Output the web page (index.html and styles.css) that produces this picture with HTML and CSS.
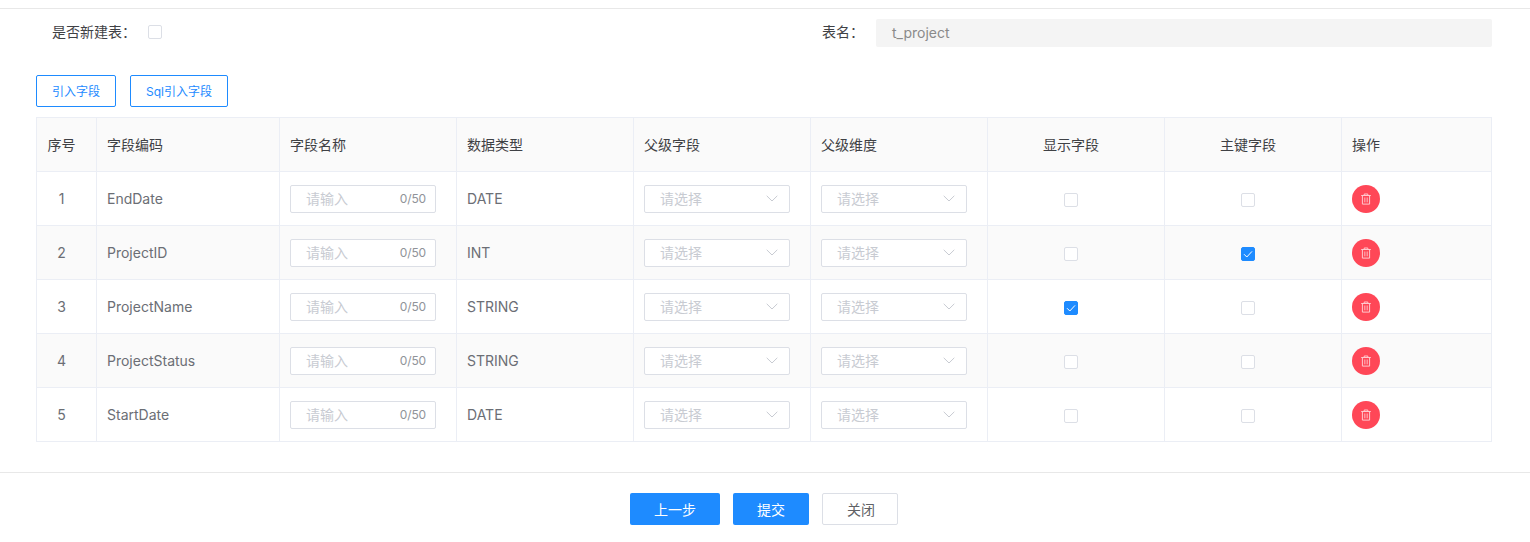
FILE: index.html
```html
<!DOCTYPE html>
<html lang="zh">
<head>
<meta charset="utf-8">
<title>表配置</title>
<link rel="stylesheet" href="styles.css">
</head>
<body>
<svg class="defs" width="0" height="0">
  <symbol id="trash" viewBox="0 0 12 12">
    <path d="M1.2 2.5h9.6M4.2 2.4V1h3.6v1.4M2.4 2.5v8.6h7.2V2.5" fill="none" stroke="currentColor" stroke-width="1"/>
    <path d="M4.5 4.5v4.8M6 4.5v4.8M7.5 4.5v4.8" fill="none" stroke="currentColor" stroke-width=".8" opacity=".75"/>
  </symbol>
  <symbol id="chev" viewBox="0 0 12 7"><path d="M.7.8 6 6l5.3-5.2" fill="none" stroke="currentColor" stroke-width="1"/></symbol>
  <symbol id="tick" viewBox="0 0 14 14"><path d="M3 7.2 5.8 10 11 4.4" fill="none" stroke="currentColor" stroke-width="1"/></symbol>
</svg>
<main class="page">
  <section class="form-row">
    <div class="field field-left">
      <span class="label">是否新建表：</span>
      <span class="check check-form"></span>
    </div>
    <div class="field field-right">
      <span class="label">表名：</span>
      <div class="readonly">t_project</div>
    </div>
  </section>
  <div class="toolbar">
    <button class="btn-outline btn-a">引入字段</button>
    <button class="btn-outline btn-b">Sql引入字段</button>
  </div>
  <table class="grid">
    <colgroup>
      <col class="c-no"><col class="c-code"><col class="c-std"><col class="c-std"><col class="c-std"><col class="c-std"><col class="c-std"><col class="c-std"><col class="c-op">
    </colgroup>
    <thead>
      <tr><th class="center">序号</th><th>字段编码</th><th>字段名称</th><th>数据类型</th><th>父级字段</th><th>父级维度</th><th class="center">显示字段</th><th class="center">主键字段</th><th>操作</th></tr>
    </thead>
    <tbody>
      <tr>
        <td class="center">1</td><td>EndDate</td>
        <td><div class="input"><span>请输入</span><em>0/50</em></div></td><td>DATE</td>
        <td><div class="select"><span>请选择</span><svg class="chev"><use href="#chev"/></svg></div></td>
        <td><div class="select"><span>请选择</span><svg class="chev"><use href="#chev"/></svg></div></td>
        <td class="center"><span class="check"></span></td><td class="center"><span class="check"></span></td>
        <td><button class="del" aria-label="删除"><svg class="trash"><use href="#trash"/></svg></button></td>
      </tr>
      <tr>
        <td class="center">2</td><td>ProjectID</td>
        <td><div class="input"><span>请输入</span><em>0/50</em></div></td><td>INT</td>
        <td><div class="select"><span>请选择</span><svg class="chev"><use href="#chev"/></svg></div></td>
        <td><div class="select"><span>请选择</span><svg class="chev"><use href="#chev"/></svg></div></td>
        <td class="center"><span class="check"></span></td><td class="center"><span class="check on"><svg class="tick"><use href="#tick"/></svg></span></td>
        <td><button class="del" aria-label="删除"><svg class="trash"><use href="#trash"/></svg></button></td>
      </tr>
      <tr>
        <td class="center">3</td><td>ProjectName</td>
        <td><div class="input"><span>请输入</span><em>0/50</em></div></td><td>STRING</td>
        <td><div class="select"><span>请选择</span><svg class="chev"><use href="#chev"/></svg></div></td>
        <td><div class="select"><span>请选择</span><svg class="chev"><use href="#chev"/></svg></div></td>
        <td class="center"><span class="check on"><svg class="tick"><use href="#tick"/></svg></span></td><td class="center"><span class="check"></span></td>
        <td><button class="del" aria-label="删除"><svg class="trash"><use href="#trash"/></svg></button></td>
      </tr>
      <tr>
        <td class="center">4</td><td>ProjectStatus</td>
        <td><div class="input"><span>请输入</span><em>0/50</em></div></td><td>STRING</td>
        <td><div class="select"><span>请选择</span><svg class="chev"><use href="#chev"/></svg></div></td>
        <td><div class="select"><span>请选择</span><svg class="chev"><use href="#chev"/></svg></div></td>
        <td class="center"><span class="check"></span></td><td class="center"><span class="check"></span></td>
        <td><button class="del" aria-label="删除"><svg class="trash"><use href="#trash"/></svg></button></td>
      </tr>
      <tr>
        <td class="center">5</td><td>StartDate</td>
        <td><div class="input"><span>请输入</span><em>0/50</em></div></td><td>DATE</td>
        <td><div class="select"><span>请选择</span><svg class="chev"><use href="#chev"/></svg></div></td>
        <td><div class="select"><span>请选择</span><svg class="chev"><use href="#chev"/></svg></div></td>
        <td class="center"><span class="check"></span></td><td class="center"><span class="check"></span></td>
        <td><button class="del" aria-label="删除"><svg class="trash"><use href="#trash"/></svg></button></td>
      </tr>
    </tbody>
  </table>
  <footer class="footer">
    <button class="btn btn-primary btn-prev">上一步</button>
    <button class="btn btn-primary btn-submit">提交</button>
    <button class="btn btn-close">关闭</button>
  </footer>
</main>
</body>
</html>
```
FILE: styles.css
```css
* { box-sizing: border-box; }
html, body { margin: 0; padding: 0; background: #fff; }
body {
  font-family: Inter, "Noto Sans CJK SC", sans-serif;
  font-size: 14px;
  color: #606266;
  overflow: hidden;
}
.defs { position: absolute; }
.page { height: 542px; padding-top: 8px; }
.form-row {
  display: flex;
  height: 67px;
  border-top: 1px solid #e8e8e8;
  padding: 10px 38px 0 52px;
}
.field { display: flex; align-items: flex-start; }
.field-left { width: 770px; }
.field-right { flex: 1; }
.label { color: #3f4145; line-height: 26px; }
.field-left .label { width: 96px; }
.field-right .label { width: 54px; }
.check-form { margin-top: 6px; }
.readonly {
  flex: 1;
  height: 28px;
  line-height: 28px;
  padding-left: 16px;
  background: #f4f4f4;
  border-radius: 2px;
  color: #8a8a8a;
}
.toolbar { display: flex; gap: 14px; height: 42px; padding-left: 36px; }
.btn-outline {
  height: 32px;
  padding: 0 0 2px;
  background: #fff;
  border: 1px solid #1e8bff;
  border-radius: 2px;
  color: #1e8bff;
  font: inherit;
  font-size: 12px;
}
.btn-a { width: 80px; }
.btn-b { width: 98px; }
.grid {
  margin-left: 36px;
  width: 1456px;
  table-layout: fixed;
  border-collapse: collapse;
}
.c-no { width: 60px; }
.c-code { width: 183px; }
.c-std { width: 177px; }
.c-op { width: 150px; }
.grid th, .grid td {
  height: 54px;
  padding: 0 10px;
  border: 1px solid #ebeef5;
  font-weight: 400;
  text-align: left;
  vertical-align: middle;
}
.grid th { background: #fafafa; color: #3f4145; padding-bottom: 2px; }
.grid td { color: #6b6e75; }
.grid tbody tr:nth-child(even) td { background: #fafafa; }
.grid .center { text-align: center; padding-right: 20px; }
.input, .select {
  display: flex;
  align-items: center;
  justify-content: space-between;
  width: 146px;
  height: 28px;
  padding: 0 9px 0 15px;
  background: #fff;
  border: 1px solid #dcdfe6;
  border-radius: 2px;
  color: #c8cbd2;
}
.input span, .select span { padding-bottom: 2px; }
.input em { font-style: normal; font-size: 12px; letter-spacing: -.15px; color: #909399; }
.select { padding-right: 11px; }
.chev { width: 12px; height: 7px; color: #c8cbd2; }
.check {
  display: inline-block;
  width: 14px;
  height: 14px;
  background: #fff;
  border: 1px solid #dcdfe6;
  border-radius: 2px;
  vertical-align: middle;
}
.check.on { position: relative; background: #1e8bff; border-color: #1e8bff; color: #fff; }
.tick { position: absolute; left: -1px; top: -1px; width: 14px; height: 14px; }
.del {
  display: flex;
  align-items: center;
  justify-content: center;
  width: 28px;
  height: 28px;
  padding: 0;
  border: 0;
  border-radius: 50%;
  background: #ff4757;
  color: #ffc9ce;
}
.trash { width: 12px; height: 12px; }
.footer {
  display: flex;
  justify-content: center;
  gap: 13px;
  margin-top: 30px;
  padding: 20px 2px 0 0;
  border-top: 1px solid #e8e8e8;
}
.btn {
  height: 32px;
  padding: 0;
  border: 1px solid transparent;
  border-radius: 2px;
  font: inherit;
  font-size: 14px;
}
.btn-primary { background: #1e8bff; color: #fff; }
.btn-prev { width: 90px; }
.btn-submit { width: 76px; }
.btn-close { width: 76px; padding-left: 2px; background: #fff; border-color: #dcdfe6; color: #606266; }
```
